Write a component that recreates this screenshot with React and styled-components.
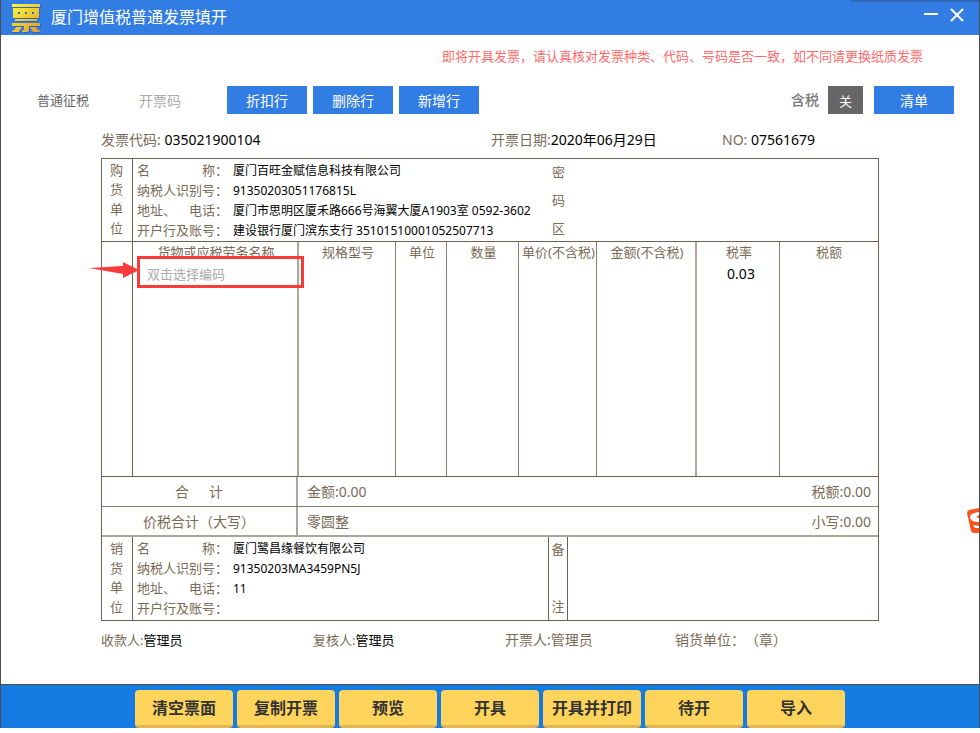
import { useState } from 'react';
import styled, { createGlobalStyle } from 'styled-components';

const buyerFields = [
  { id: 'buyer-name', label: ['名', '称：'], value: '厦门百旺金赋信息科技有限公司' },
  { id: 'buyer-tax', label: ['纳税人识别号：'], value: '91350203051176815L' },
  { id: 'buyer-address', label: ['地址、', '电话：'], value: '厦门市思明区厦禾路666号海翼大厦A1903室 0592-3602' },
  { id: 'buyer-bank', label: ['开户行及账号：'], value: '建设银行厦门滨东支行 35101510001052507713' },
];

const sellerFields = [
  { id: 'seller-name', label: ['名', '称：'], value: '厦门鹭昌缘餐饮有限公司' },
  { id: 'seller-tax', label: ['纳税人识别号：'], value: '91350203MA3459PN5J' },
  { id: 'seller-address', label: ['地址、', '电话：'], value: '11' },
  { id: 'seller-bank', label: ['开户行及账号：'], value: '' },
];

const columns = [
  { title: '货物或应税劳务名称', width: '166px', thick: true },
  { title: '规格型号', width: '97px' },
  { title: '单位', width: '51px' },
  { title: '数量', width: '72px' },
  { title: '单价(不含税)', width: '78px' },
  { title: '金额(不含税)', width: '100px', thick: true },
  { title: '税率', width: '83px' },
  { title: '税额', width: 'auto' },
];

const actions = ['清空票面', '复制开票', '预览', '开具', '开具并打印', '待开', '导入'];

const logoPath =
  'M1 2H29V5H1zM2 6H28V16H2zM7 10V12H9V10zM14 10V12H16V10zM21 10V12H23V10zM4 17H26V19H4zM1 21H29V24H18V28Q18 30 16 30H11V28H13V24H1zM5 25H11L8 30H1V29L3 28zM19 25H25L27 28L29 29V30H22z';

const Logo = () => (
  <svg width="32" height="32" viewBox="0 0 32 32" aria-hidden="true">
    <defs>
      <linearGradient id="gold" gradientUnits="userSpaceOnUse" x1="2" y1="2" x2="28" y2="30">
        <stop offset="0" stopColor="#fdf73a" />
        <stop offset="1" stopColor="#e39b2c" />
      </linearGradient>
    </defs>
    <path d={logoPath} fill="#2459a0" fillRule="evenodd" opacity="0.6" transform="translate(1 1)" />
    <path d={logoPath} fill="url(#gold)" fillRule="evenodd" />
  </svg>
);

const InputBadge = () => (
  <svg width="12" height="26" viewBox="0 0 12 26" aria-hidden="true">
    <path d="M0 5Q0 3 2 2L12 0V25H7Q5 25 4 23Z" fill="#fa541c" />
    <path d="M12 4Q3 5 3 9Q3 14 12 14V10L9 9L12 7Z" fill="#fff" />
    <path d="M6 17L12 18V20H8Z" fill="#fff" />
  </svg>
);

const Fields = ({ items }) => (
  <FieldList>
    {items.map((item) => (
      <Field key={item.id}>
        <FieldLabel htmlFor={item.id}>
          {item.label.map((part) => (
            <span key={part}>{part}</span>
          ))}
        </FieldLabel>
        <FieldInput id={item.id} defaultValue={item.value} />
      </Field>
    ))}
  </FieldList>
);

const SideTitle = ({ text }) => (
  <Side>
    {text.split('').map((char) => (
      <span key={char}>{char}</span>
    ))}
  </Side>
);

const App = () => {
  const [taxIncluded, setTaxIncluded] = useState(false);

  return (
    <>
      <GlobalStyle />
      <Window lang="zh-CN">
        <TitleBar>
          <Logo />
          <Title>厦门增值税普通发票填开</Title>
          <WindowButton aria-label="最小化">
            <svg width="14" height="14" viewBox="0 0 14 14">
              <path d="M0 6H14" stroke="#fff" strokeWidth="2" />
            </svg>
          </WindowButton>
          <WindowButton aria-label="关闭">
            <svg width="14" height="14" viewBox="0 0 14 14">
              <path d="M1 1L13 13M13 1L1 13" stroke="#fff" strokeWidth="2" />
            </svg>
          </WindowButton>
          <TopShade />
        </TitleBar>

        <Notice>即将开具发票，请认真核对发票种类、代码、号码是否一致，如不同请更换纸质发票</Notice>

        <Toolbar>
          <TaxType>普通征税</TaxType>
          <CodeInput placeholder="开票码" aria-label="开票码" />
          <ToolButton>折扣行</ToolButton>
          <ToolButton>删除行</ToolButton>
          <ToolButton>新增行</ToolButton>
          <SwitchLabel htmlFor="tax-switch">含税</SwitchLabel>
          <SwitchButton id="tax-switch" onClick={() => setTaxIncluded(!taxIncluded)}>
            {taxIncluded ? '开' : '关'}
          </SwitchButton>
          <ToolButton>清单</ToolButton>
        </Toolbar>

        <Sheet>
          <Meta>
            <span>发票代码: <b>035021900104</b></span>
            <span>开票日期:<b>2020年06月29日</b></span>
            <span>NO: <b>07561679</b></span>
          </Meta>

          <Invoice>
            <Party>
              <SideTitle text="购货单位" />
              <Fields items={buyerFields} />
              <Cipher>
                <span>密</span>
                <span>码</span>
                <span>区</span>
              </Cipher>
            </Party>

            <Goods>
              <GoodsMargin />
              <GoodsTable>
                <colgroup>
                  {columns.map((col) => (
                    <Col key={col.title} $width={col.width} />
                  ))}
                </colgroup>
                <thead>
                  <tr>
                    {columns.map((col) => (
                      <HeadCell key={col.title} $thick={col.thick}>{col.title}</HeadCell>
                    ))}
                  </tr>
                </thead>
                <tbody>
                  <tr>
                    {columns.map((col, index) => (
                      <Cell key={col.title} $thick={col.thick}>
                        {index === 0 && <GoodsInput placeholder="双击选择编码" aria-label={col.title} />}
                        {col.title === '税率' && '0.03'}
                      </Cell>
                    ))}
                  </tr>
                </tbody>
              </GoodsTable>
              <Highlight />
              <Arrow width="50" height="18" viewBox="0 0 50 18" aria-hidden="true">
                <path d="M0 7L34 5V1L50 9L34 17V13Z" fill="#fb3a3a" />
              </Arrow>
            </Goods>

            <Total>
              <TotalName><span>合</span><span>计</span></TotalName>
              <TotalValue><span>金额:0.00</span><span>税额:0.00</span></TotalValue>
            </Total>
            <Total $last>
              <TotalName>价税合计（大写）</TotalName>
              <TotalValue><span>零圆整</span><span>小写:0.00</span></TotalValue>
            </Total>

            <Party>
              <SideTitle text="销货单位" />
              <Fields items={sellerFields} />
              <Remark htmlFor="remark"><span>备</span><span>注</span></Remark>
              <RemarkInput id="remark" />
            </Party>
          </Invoice>

          <People>
            <Person>收款人:<b>管理员</b></Person>
            <Person>复核人:<b>管理员</b></Person>
            <Person $large>开票人:管理员</Person>
            <Person $large>销货单位：（章）</Person>
          </People>
        </Sheet>

        <Footer>
          {actions.map((name) => (
            <ActionButton key={name}>{name}</ActionButton>
          ))}
        </Footer>
        <Badge><InputBadge /></Badge>
      </Window>
    </>
  );
};

const GlobalStyle = createGlobalStyle`
  * {
    box-sizing: border-box;
  }
  body {
    margin: 0;
    background: #fff;
    text-spacing-trim: space-all;
  }
  body, button, input, textarea {
    font-family: "Noto Sans", "Noto Sans CJK SC", sans-serif;
  }
`;

const Window = styled.div`
  position: relative;
  overflow: hidden;
  border-left: 1px solid #4a4d52;
  border-right: 1px solid #4a4d52;
  color: #7a6a56;
  font-size: 14px;
  line-height: 20px;
`;

const TitleBar = styled.header`
  position: relative;
  display: flex;
  align-items: center;
  height: 35px;
  padding: 0 15px 0 10px;
  background: #327de3;
  color: #fff;
`;

const Title = styled.h1`
  flex: 1;
  margin: 0 0 2px 8px;
  font-size: 16px;
  font-weight: 400;
  line-height: 24px;
`;

const WindowButton = styled.button`
  display: flex;
  margin: 0 0 6px 12px;
  padding: 0;
  border: 0;
  background: none;
`;

const TopShade = styled.div`
  position: absolute;
  top: 0;
  right: 0;
  width: 128px;
  height: 3px;
  background: linear-gradient(#2a5ea6, #327de3);
`;

const Notice = styled.p`
  margin: 11px 56px 0;
  color: #ff6b6b;
  font-size: 13px;
  line-height: 20px;
  text-align: right;
`;

const Toolbar = styled.div`
  display: flex;
  align-items: center;
  gap: 6px;
  margin: 20px 25px 0 36px;
`;

const TaxType = styled.span`
  width: 96px;
  color: #666;
  font-size: 13px;
`;

const CodeInput = styled.input`
  width: 82px;
  padding: 0;
  border: 0;
  outline: 0;
  font-size: 14px;
  &::placeholder {
    color: #aaa;
  }
`;

const ToolButton = styled.button`
  width: 80px;
  height: 28px;
  padding: 0;
  border: 0;
  background: #327de3;
  color: #fff;
  font-size: 14px;
`;

const SwitchLabel = styled.label`
  margin-left: auto;
  color: #777;
  font-weight: 500;
`;

const SwitchButton = styled.button`
  width: 35px;
  height: 28px;
  margin: 0 5px 0 3px;
  padding: 0;
  border: 0;
  background: #666;
  color: #fff;
  font-size: 13px;
`;

const Sheet = styled.main`
  margin: 16px 100px 0;
`;

const Meta = styled.div`
  display: grid;
  grid-template-columns: 390fr 231fr 157fr;
  margin-bottom: 8px;
  b {
    color: #000;
    font-weight: 400;
  }
`;

const Invoice = styled.section`
  border: 1px solid #6f624f;
`;

const Party = styled.div`
  display: flex;
  height: 82px;
  &:last-child {
    height: 83px;
  }
`;

const Side = styled.div`
  display: flex;
  flex-direction: column;
  align-items: center;
  justify-content: space-around;
  width: 31px;
  padding: 2px 1px 3px 0;
  border-right: 1px solid #6f624f;
  font-size: 13px;
  line-height: 19px;
`;

const FieldList = styled.div`
  flex: 1;
  min-width: 0;
  padding: 1px 16px 1px 4px;
`;

const Field = styled.div`
  display: flex;
  align-items: center;
  height: 20px;
`;

const FieldLabel = styled.label`
  display: flex;
  flex: none;
  justify-content: space-between;
  width: 91px;
  margin-right: 5px;
  font-size: 13px;
`;

const FieldInput = styled.input`
  flex: 1;
  min-width: 0;
  height: 20px;
  padding: 0;
  border: 0;
  outline: 0;
  background: none;
  color: #000;
  font-size: 12px;
`;

const Cipher = styled.div`
  display: flex;
  flex-direction: column;
  justify-content: space-between;
  width: 330px;
  padding: 3px 4px;
  font-size: 13px;
`;

const Goods = styled.div`
  position: relative;
  display: flex;
  height: 236px;
  border-top: 1px solid #6f624f;
  border-bottom: 1px solid #6f624f;
`;

const GoodsMargin = styled.div`
  flex: none;
  width: 31px;
  border-right: 1px solid #6f624f;
`;

const GoodsTable = styled.table`
  flex: 1;
  width: 100%;
  height: 100%;
  table-layout: fixed;
  border-collapse: separate;
  border-spacing: 0;
`;

const Col = styled.col`
  width: ${({ $width }) => $width};
`;

const HeadCell = styled.th`
  height: 20px;
  padding: 0 0 0 2px;
  border-right: ${({ $thick }) => ($thick ? '2px solid #aea695' : '1px solid #8a7c6b')};
  font-size: 13px;
  font-weight: 400;
  white-space: nowrap;
  &:last-child {
    border-right: 0;
    padding: 0;
  }
`;

const Cell = styled.td`
  padding: 2px 0 0 6px;
  border-right: ${({ $thick }) => ($thick ? '2px solid #aea695' : '1px solid #8a7c6b')};
  color: #000;
  text-align: center;
  vertical-align: top;
  &:last-child {
    border-right: 0;
  }
`;

const GoodsInput = styled.input`
  width: 100%;
  height: 20px;
  padding: 0 8px;
  border: 0;
  outline: 0;
  background: none;
  font-size: 13px;
  &::placeholder {
    color: #aaa;
  }
`;

const Highlight = styled.div`
  position: absolute;
  top: 14px;
  left: 35px;
  width: 167px;
  height: 32px;
  border: 3px solid #fb3a3a;
`;

const Arrow = styled.svg`
  position: absolute;
  top: 19px;
  left: -13px;
`;

const Total = styled.div`
  display: flex;
  height: 30px;
  border-bottom: ${({ $last }) => ($last ? '2px solid #aea695' : '1px solid #8a7c6b')};
  line-height: 29px;
`;

const TotalName = styled.div`
  display: flex;
  flex: none;
  justify-content: center;
  gap: 20px;
  width: 196px;
  border-right: 2px solid #aea695;
`;

const TotalValue = styled.div`
  display: flex;
  flex: 1;
  justify-content: space-between;
  padding: 0 7px 0 9px;
`;

const Remark = styled.label`
  display: flex;
  flex-direction: column;
  align-items: center;
  justify-content: space-between;
  width: 20px;
  padding: 2px 0 4px;
  border-left: 1px solid #6f624f;
  border-right: 1px solid #6f624f;
  font-size: 13px;
`;

const RemarkInput = styled.textarea`
  width: 310px;
  border: 0;
  outline: 0;
  resize: none;
`;

const People = styled.div`
  display: grid;
  grid-template-columns: 212fr 192fr 170fr 204fr;
  margin-top: 9px;
  b {
    color: #000;
    font-weight: 400;
  }
`;

const Person = styled.span`
  font-size: ${({ $large }) => ($large ? '14px' : '13px')};
`;

const Footer = styled.footer`
  display: flex;
  justify-content: center;
  gap: 4px;
  margin-top: 34px;
  padding-top: 5px;
  border-top: 1px solid #4a4d52;
  background: #147be3;
`;

const ActionButton = styled.button`
  width: 98px;
  height: 38px;
  padding: 0 0 2px;
  border: 0;
  border-bottom: 3px solid #dfb64f;
  border-radius: 4px;
  background: #ffd45c;
  color: #333;
  font-size: 16px;
  font-weight: 700;
`;

const Badge = styled.div`
  position: absolute;
  top: 508px;
  right: 0;
`;

export default App;
